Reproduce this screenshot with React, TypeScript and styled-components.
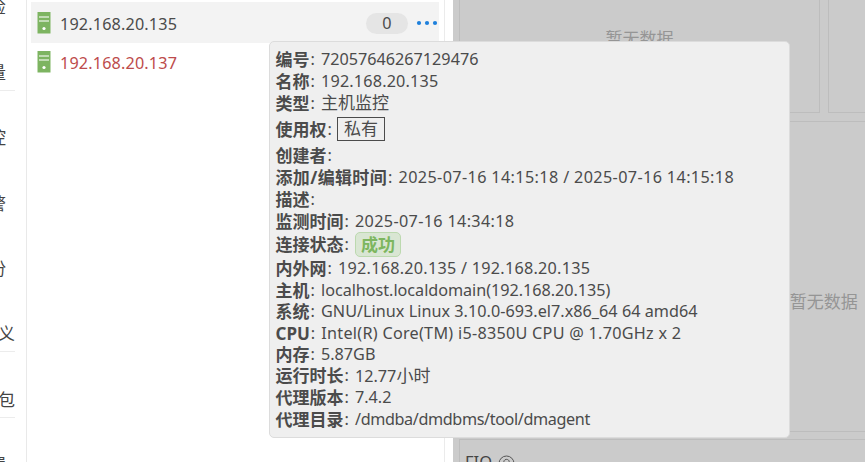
import React from 'react';
import styled, { createGlobalStyle, css } from 'styled-components';

const GlobalStyle = createGlobalStyle`
  * {
    box-sizing: border-box;
  }

  body {
    margin: 0;
    overflow: hidden;
    background: #fff;
    color: #4b4b4b;
    font-family: 'Noto Sans', 'Noto Sans CJK SC', sans-serif;
    font-size: 16.2px;
  }
`;

const Page = styled.div`
  position: relative;
  display: flex;
  width: 865px;
  height: 462px;
  overflow: hidden;
`;

const Menu = styled.nav`
  flex: none;
  width: 27px;
  border-right: 1px solid #e9e9e9;
`;

const MenuItem = styled.div<{ $long?: boolean; $line?: boolean }>`
  display: flex;
  justify-content: flex-end;
  align-items: flex-end;
  width: 15px;
  height: 65.4px;
  padding: 0 ${(props) => (props.$long ? '0' : '9px')} 5px 0;
  border-bottom: 1px solid ${(props) => (props.$line ? '#ececec' : '#fff')};
  color: #444;
  font-size: 17px;
  line-height: 24px;
  white-space: nowrap;

  &:first-child {
    margin-top: -40px;
  }
`;

const HostList = styled.div`
  flex: none;
  width: 418px;
  padding: 2px 5px 0 4px;
  border-right: 1px solid #ebebeb;
`;

const HostRow = styled.div<{ $active?: boolean; $alert?: boolean }>`
  display: flex;
  align-items: center;
  height: ${(props) => (props.$active ? '41px' : '38px')};
  padding: 0 1px 0 6px;
  background: ${(props) => (props.$active ? '#f3f3f3' : '#fff')};
  color: ${(props) => (props.$alert ? '#bd4b4b' : '#4b4b4b')};
`;

const HostName = styled.span`
  flex: 1;
  margin-left: 9px;
  padding-top: 2px;
  letter-spacing: 0.16px;
`;

const Count = styled.span`
  width: 42px;
  height: 21px;
  margin-right: 8px;
  margin-top: 1px;
  border-radius: 11px;
  background: #e5e5e5;
  line-height: 21px;
  text-align: center;
`;

const Dashboard = styled.main`
  flex: 1;
  display: grid;
  grid-template-columns: 361px 361px;
  grid-template-rows: 113px 311px 60px;
  gap: 7.5px;
  margin-left: 8px;
  padding-left: 6px;
  background: #cbcbcb;
  overflow: hidden;
`;

const Card = styled.section<{ $wide?: boolean; $top?: boolean }>`
  display: flex;
  align-items: center;
  justify-content: center;
  grid-column: ${(props) => (props.$wide ? 'span 2' : 'auto')};
  border: 1px solid #bdbdbd;
  border-top-width: ${(props) => (props.$top ? '0' : '1px')};
  color: #959595;
  font-size: 17px;
`;

const Empty = styled.span<{ $up?: boolean }>`
  margin-top: ${(props) => (props.$up ? '-37px' : '48px')};
`;

const CardTitle = styled.div`
  display: flex;
  align-items: center;
  gap: 6px;
  align-self: flex-start;
  flex: 1;
  padding: 11px 5px;
  color: #444;
  font-size: 16.5px;
  line-height: 22px;
`;

const Tooltip = styled.div`
  position: absolute;
  top: 41px;
  left: 269px;
  width: 521px;
  height: 397px;
  padding: 6.5px 6px;
  border: 1px solid #dcdcdc;
  border-radius: 5px;
  background: #efefef;
`;

const InfoRow = styled.div<{ $height?: number }>`
  display: flex;
  align-items: center;
  height: ${(props) => props.$height || 21.9}px;
  margin-left: -0.5px;
  line-height: 21px;
  white-space: pre;
`;

const Label = styled.b<{ $spacing?: number }>`
  font-size: 17px;
  letter-spacing: ${(props) => props.$spacing || 0}px;
`;

const Colon = styled.span`
  width: 11.5px;
  padding-left: 1px;
`;

const Value = styled.span<{ $spacing?: number }>`
  letter-spacing: ${(props) => props.$spacing || 0}px;
`;

const Chinese = styled.span`
  font-size: 17px;
  letter-spacing: 0;
`;

const Tag = styled.span<{ $success?: boolean }>`
  display: block;
  height: 24px;
  margin-left: -1px;
  padding: 0 6px;
  border: 1px solid #4b4b4b;
  font-size: 17px;
  line-height: 22px;

  ${(props) =>
    props.$success &&
    css`
      height: 25px;
      margin-left: 0;
      padding: 0 5px;
      border-color: #bcd9af;
      border-radius: 5px;
      background: #d9e6d3;
      color: #7db65f;
      font-weight: bold;
      line-height: 23px;
    `}
`;

const menu = [
  { text: '巡检' },
  { text: '度量', line: true },
  { text: '监控' },
  { text: '告警' },
  { text: '备份' },
  { text: '定义', long: true, line: true },
  { text: '软包', long: true, line: true },
  { text: '配置' },
];

type Info = {
  label: string;
  value?: React.ReactNode;
  height?: number;
  spacing?: number;
  labelSpacing?: number;
};

const infos: Info[] = [
  { label: '编号', value: '72057646267129476' },
  { label: '名称', value: '192.168.20.135', spacing: 0.18 },
  { label: '类型', value: <Chinese>主机监控</Chinese> },
  { label: '使用权', value: <Tag>私有</Tag>, height: 30.5 },
  { label: '创建者' },
  {
    label: '添加/编辑时间',
    value: '2025-07-16 14:15:18 / 2025-07-16 14:15:18',
    spacing: 0.37,
    labelSpacing: 0.36,
  },
  { label: '描述' },
  { label: '监测时间', value: '2025-07-16 14:34:18', spacing: 0.34 },
  { label: '连接状态', value: <Tag $success>成功</Tag>, height: 25 },
  { label: '内外网', value: '192.168.20.135 / 192.168.20.135', spacing: 0.26 },
  {
    label: '主机',
    value: 'localhost.localdomain(192.168.20.135)',
    spacing: -0.03,
  },
  {
    label: '系统',
    value: 'GNU/Linux Linux 3.10.0-693.el7.x86_64 64 amd64',
    spacing: 0.03,
  },
  {
    label: 'CPU',
    value: 'Intel(R) Core(TM) i5-8350U CPU @ 1.70GHz x 2',
    height: 20.5,
    spacing: 0.27,
  },
  { label: '内存', value: '5.87GB', height: 21.5 },
  {
    label: '运行时长',
    value: (
      <>
        12.77<Chinese>小时</Chinese>
      </>
    ),
  },
  { label: '代理版本', value: '7.4.2' },
  { label: '代理目录', value: '/dmdba/dmdbms/tool/dmagent', spacing: -0.38 },
];

const ServerIcon = () => (
  <svg width="14" height="22" viewBox="0 0 14 22">
    <path fill="#7db461" d="M0.5 0h13v21.5H0.5z" />
    <path stroke="#d7e8cf" strokeWidth="1.3" d="M2 5h10M2 9h10" />
    <circle cx="7" cy="16.5" r="1.6" fill="#fff" />
  </svg>
);

const MoreIcon = () => (
  <svg width="22" height="6" viewBox="0 0 22 6" fill="#1e80dc">
    <circle cx="3" cy="3" r="2.1" />
    <circle cx="11" cy="3" r="2.1" />
    <circle cx="19" cy="3" r="2.1" />
  </svg>
);

const HelpIcon = () => (
  <svg width="17" height="17" viewBox="0 0 17 17" fill="none" stroke="#555">
    <circle cx="8.5" cy="9.5" r="7.5" />
    <path d="M5.8 8c0-3.5 5.4-3.5 5.4-.2 0 2-2.7 2-2.7 4M8.5 13v1.2" />
  </svg>
);

const App = () => (
  <>
    <GlobalStyle />
    <Page>
      <Menu>
        {menu.map((item) => (
          <MenuItem key={item.text} $long={item.long} $line={item.line}>
            {item.text}
          </MenuItem>
        ))}
      </Menu>
      <HostList>
        <HostRow $active>
          <ServerIcon />
          <HostName>192.168.20.135</HostName>
          <Count>0</Count>
          <MoreIcon />
        </HostRow>
        <HostRow $alert>
          <ServerIcon />
          <HostName>192.168.20.137</HostName>
        </HostRow>
      </HostList>
      <Dashboard>
        <Card $top>
          <Empty $up>暂无数据</Empty>
        </Card>
        <Card $top />
        <Card $wide>
          <Empty>暂无数据</Empty>
        </Card>
        <Card $wide>
          <CardTitle>
            FIO <HelpIcon />
          </CardTitle>
        </Card>
      </Dashboard>
      <Tooltip>
        {infos.map((info) => (
          <InfoRow key={info.label} $height={info.height}>
            <Label $spacing={info.labelSpacing}>{info.label}</Label>
            <Colon>:</Colon>
            <Value $spacing={info.spacing}>{info.value}</Value>
          </InfoRow>
        ))}
      </Tooltip>
    </Page>
  </>
);

export default App;
